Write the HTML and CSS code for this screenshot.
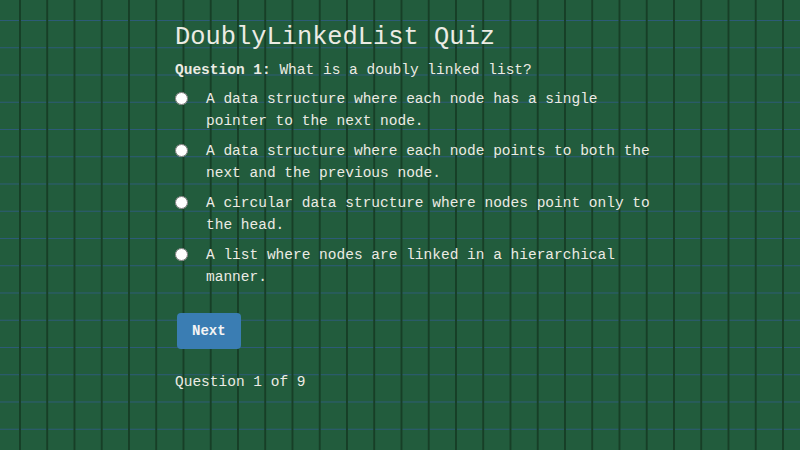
FILE: index.html
```html
<!DOCTYPE html>
<html lang="en">
<head>
<meta charset="utf-8">
<title>DoublyLinkedList Quiz</title>
<link rel="stylesheet" href="styles.css">
</head>
<body>
<main class="quiz">
  <h1 class="title">DoublyLinkedList Quiz</h1>
  <p class="question"><strong>Question 1:</strong> What is a doubly linked list?</p>
  <ul class="options">
    <li class="option"><input type="radio" name="q1" id="o1"><label for="o1">A data structure where each node has a single pointer to the next node.</label></li>
    <li class="option"><input type="radio" name="q1" id="o2"><label for="o2">A data structure where each node points to both the next and the previous node.</label></li>
    <li class="option"><input type="radio" name="q1" id="o3"><label for="o3">A circular data structure where nodes point only to the head.</label></li>
    <li class="option"><input type="radio" name="q1" id="o4"><label for="o4">A list where nodes are linked in a hierarchical manner.</label></li>
  </ul>
  <button class="next" type="button">Next</button>
  <p class="progress">Question 1 of 9</p>
</main>
</body>
</html>
```
FILE: styles.css
```css
html, body {
  margin: 0;
  height: 100%;
}
body {
  font-family: "Liberation Mono", "Courier New", monospace;
  color: #ecebe4;
  background-color: #225c3d;
  background-image:
    linear-gradient(90deg, #173f27 0, #173f27 2px, transparent 2px),
    linear-gradient(180deg, #2d5b78 0, #2d5b78 1px, transparent 1px);
  background-size: 27.25px 27.25px;
  background-position: 19px 20px;
}
.quiz {
  margin-left: 175px;
  width: 485px;
  padding-top: 23px;
}
.title {
  margin: 0 0 7px;
  font-size: 25.4px;
  line-height: 30px;
  font-weight: normal;
}
.question {
  margin: 0;
  font-size: 14.5px;
  line-height: 20px;
}
.options {
  list-style: none;
  margin: 8px 0 0;
  padding: 0;
  display: flex;
  flex-direction: column;
  gap: 8px;
}
.option {
  display: flex;
  align-items: flex-start;
  gap: 18px;
  font-size: 14.5px;
  line-height: 22px;
}
.option input {
  margin: 4px 0 0;
  width: 13px;
  height: 13px;
  flex: none;
}
.next {
  margin-top: 25px;
  margin-left: 2px;
  font-family: inherit;
  font-size: 14px;
  font-weight: bold;
  line-height: 16px;
  padding: 10px 15px;
  color: #f4f4f4;
  background: #3a7db3;
  border: none;
  border-radius: 4px;
}
.progress {
  margin: 23px 0 0;
  font-size: 14.5px;
  line-height: 20px;
}
```
